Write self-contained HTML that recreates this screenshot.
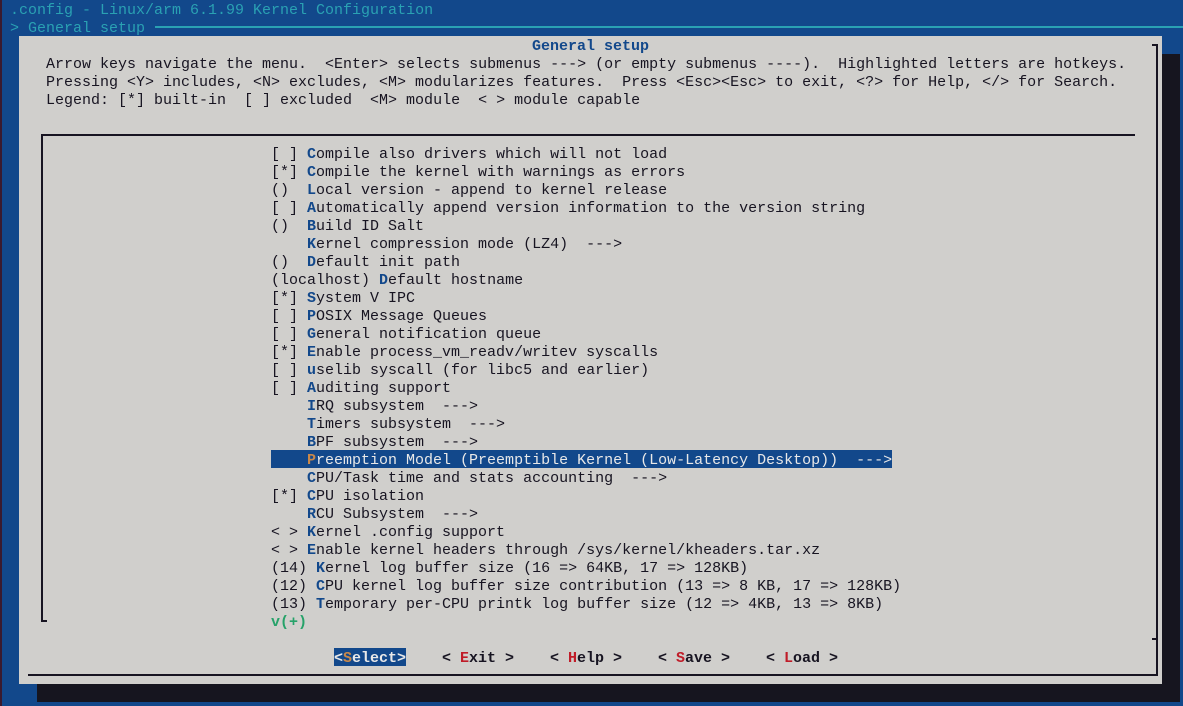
<!DOCTYPE html>
<html><head><meta charset="utf-8"><style>
*{margin:0;padding:0}
body{width:1183px;height:706px;background:#12488b;position:relative;overflow:hidden;font-family:"Liberation Mono","DejaVu Sans Mono",monospace;font-size:15px;line-height:18px;color:#171421}
.r{position:absolute;white-space:pre;height:18px;margin-top:1px}
.t{color:#2aa1b3}
.k{color:#12488b;font-weight:bold}
.b{font-weight:bold}
.red{color:#c01c28}
.abs{position:absolute}
</style></head><body>
<div class="abs" style="left:0;top:0;width:2px;height:706px;background:#3a1a2e"></div>
<div class="r t" style="top:1px;left:10px">.config - Linux/arm 6.1.99 Kernel Configuration</div>
<div class="r t" style="top:19px;left:10px">&gt; General setup</div>
<div class="abs" style="left:155px;top:26px;width:1028px;height:2px;background:#2aa1b3"></div>
<div class="abs" style="left:37px;top:54px;width:1143px;height:648px;background:#16151f"></div>
<div class="abs" style="left:19px;top:36px;width:1143px;height:648px;background:#d0cfcc"></div>
<div class="abs" style="left:28px;top:674px;width:1130px;height:2px;background:#171421"></div>
<div class="abs" style="left:1156px;top:45px;width:2px;height:631px;background:#171421"></div>
<div class="abs" style="left:1152px;top:44px;width:6px;height:2px;background:#171421"></div>
<div class="abs" style="left:1152px;top:638px;width:6px;height:2px;background:#171421"></div>
<div class="abs" style="left:41px;top:134px;width:1094px;height:2px;background:#171421"></div>
<div class="abs" style="left:41px;top:134px;width:2px;height:488px;background:#171421"></div>
<div class="abs" style="left:41px;top:620px;width:6px;height:2px;background:#171421"></div>
<div class="r k" style="top:37px;left:532px">General setup</div>
<div class="r" style="top:55px;left:46px">Arrow keys navigate the menu.  &lt;Enter&gt; selects submenus ---&gt; (or empty submenus ----).  Highlighted letters are hotkeys.</div>
<div class="r" style="top:73px;left:46px">Pressing &lt;Y&gt; includes, &lt;N&gt; excludes, &lt;M&gt; modularizes features.  Press &lt;Esc&gt;&lt;Esc&gt; to exit, &lt;?&gt; for Help, &lt;/&gt; for Search.</div>
<div class="r" style="top:91px;left:46px">Legend: [*] built-in  [ ] excluded  &lt;M&gt; module  &lt; &gt; module capable</div>

<div class="r" style="top:145px;left:271px">[ ] <span class="k">C</span>ompile also drivers which will not load</div>
<div class="r" style="top:163px;left:271px">[*] <span class="k">C</span>ompile the kernel with warnings as errors</div>
<div class="r" style="top:181px;left:271px">()  <span class="k">L</span>ocal version - append to kernel release</div>
<div class="r" style="top:199px;left:271px">[ ] <span class="k">A</span>utomatically append version information to the version string</div>
<div class="r" style="top:217px;left:271px">()  <span class="k">B</span>uild ID Salt</div>
<div class="r" style="top:235px;left:271px">    <span class="k">K</span>ernel compression mode (LZ4)  ---&gt;</div>
<div class="r" style="top:253px;left:271px">()  <span class="k">D</span>efault init path</div>
<div class="r" style="top:271px;left:271px">(localhost) <span class="k">D</span>efault hostname</div>
<div class="r" style="top:289px;left:271px">[*] <span class="k">S</span>ystem V IPC</div>
<div class="r" style="top:307px;left:271px">[ ] <span class="k">P</span>OSIX Message Queues</div>
<div class="r" style="top:325px;left:271px">[ ] <span class="k">G</span>eneral notification queue</div>
<div class="r" style="top:343px;left:271px">[*] <span class="k">E</span>nable process_vm_readv/writev syscalls</div>
<div class="r" style="top:361px;left:271px">[ ] <span class="k">u</span>selib syscall (for libc5 and earlier)</div>
<div class="r" style="top:379px;left:271px">[ ] <span class="k">A</span>uditing support</div>
<div class="r" style="top:397px;left:271px">    <span class="k">I</span>RQ subsystem  ---&gt;</div>
<div class="r" style="top:415px;left:271px">    <span class="k">T</span>imers subsystem  ---&gt;</div>
<div class="r" style="top:433px;left:271px">    <span class="k">B</span>PF subsystem  ---&gt;</div>
<div class="abs" style="left:271px;top:450px;width:621px;height:18px;background:#12488b"></div>
<div class="r" style="top:451px;left:271px;color:#e8e8e8">    <span style="color:#c8884a;font-weight:bold">P</span>reemption Model (Preemptible Kernel (Low-Latency Desktop))  ---&gt;</div>
<div class="r" style="top:469px;left:271px">    <span class="k">C</span>PU/Task time and stats accounting  ---&gt;</div>
<div class="r" style="top:487px;left:271px">[*] <span class="k">C</span>PU isolation</div>
<div class="r" style="top:505px;left:271px">    <span class="k">R</span>CU Subsystem  ---&gt;</div>
<div class="r" style="top:523px;left:271px">&lt; &gt; <span class="k">K</span>ernel .config support</div>
<div class="r" style="top:541px;left:271px">&lt; &gt; <span class="k">E</span>nable kernel headers through /sys/kernel/kheaders.tar.xz</div>
<div class="r" style="top:559px;left:271px">(14) <span class="k">K</span>ernel log buffer size (16 =&gt; 64KB, 17 =&gt; 128KB)</div>
<div class="r" style="top:577px;left:271px">(12) <span class="k">C</span>PU kernel log buffer size contribution (13 =&gt; 8 KB, 17 =&gt; 128KB)</div>
<div class="r" style="top:595px;left:271px">(13) <span class="k">T</span>emporary per-CPU printk log buffer size (12 =&gt; 4KB, 13 =&gt; 8KB)</div>
<div class="r b" style="top:613px;left:271px;color:#26a269">v(+)</div>

<div class="abs" style="left:334px;top:648px;width:72px;height:18px;background:#12488b"></div>
<div class="r b" style="top:649px;left:334px;color:#e8e8e8">&lt;<span style="color:#c8884a">S</span>elect&gt;</div>
<div class="r b" style="top:649px;left:442px">&lt; <span class="red">E</span>xit &gt;</div>
<div class="r b" style="top:649px;left:550px">&lt; <span class="red">H</span>elp &gt;</div>
<div class="r b" style="top:649px;left:658px">&lt; <span class="red">S</span>ave &gt;</div>
<div class="r b" style="top:649px;left:766px">&lt; <span class="red">L</span>oad &gt;</div>
</body></html>
